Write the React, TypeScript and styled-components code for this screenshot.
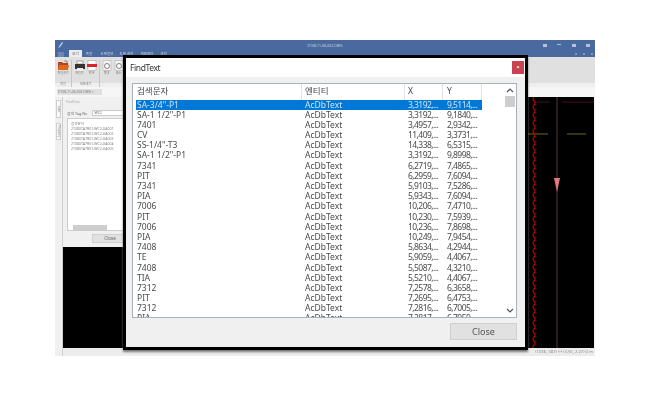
import React from "react";
import styled, { createGlobalStyle } from "styled-components";

const Global = createGlobalStyle`
  html, body { margin: 0; padding: 0; background: #fff; }
  body { font-family: "Noto Sans", "Noto Sans CJK KR", sans-serif; }
`;

const Stage = styled.div`
  width: 650px;
  height: 400px;
  padding: 40px 55px 44px 55px;
  box-sizing: border-box;
  position: relative;
  overflow: hidden;
  filter: blur(0.35px);
`;

const AppWindow = styled.div`
  width: 540px;
  height: 316px;
  display: flex;
  flex-direction: column;
  background: #f0f0f0;
`;

const TitleBar = styled.div`
  height: 10px;
  flex: none;
  background: #4a6a9f;
  display: flex;
  align-items: center;
  justify-content: center;
  position: relative;
  color: #c9d4e6;
  font-size: 3.5px;
`;

const AppLogo = styled.svg`
  position: absolute;
  left: 2px;
  top: 1px;
`;

const WindowButtons = styled.div`
  position: absolute;
  right: 5px;
  top: 4px;
  display: flex;
  gap: 10.5px;
`;

const WinDot = styled.span<{ $h: number }>`
  display: block;
  width: 4px;
  height: ${(p) => p.$h}px;
  background: #b5c3da;
`;

const TabBar = styled.div`
  height: 7px;
  flex: none;
  background: #4a6a9f;
  display: flex;
  align-items: stretch;
  padding-left: 3px;
  font-size: 3.5px;
  line-height: 7px;
`;

const AppMenu = styled.div`
  width: 6px;
  margin: 2px 5px 0 0;
  background: #6c87b4;
`;

const RibbonTab = styled.div<{ $active?: boolean; $w: number }>`
  width: ${(p) => p.$w}px;
  text-align: center;
  white-space: nowrap;
  background: ${(p) => (p.$active ? "#ececec" : "transparent")};
  color: ${(p) => (p.$active ? "#666" : "#cfd8e8")};
`;

const MiniButtons = styled.div`
  margin-left: auto;
  padding-right: 2px;
  display: flex;
  align-items: center;
  gap: 6px;
`;

const MiniDot = styled.span`
  display: block;
  width: 2px;
  height: 2px;
  background: #7f97bd;
`;

const Ribbon = styled.div`
  height: 30px;
  flex: none;
  background: linear-gradient(#e0e0e0 0 26px, #efefef 26px);
  display: flex;
  padding: 3px 0 0 0;
  box-sizing: border-box;
`;

const RibbonGroup = styled.div<{ $w: number }>`
  width: ${(p) => p.$w}px;
  flex: none;
  display: flex;
  flex-direction: column;
  align-items: center;
  border-right: 1px solid #c6c6c6;
  box-sizing: border-box;
`;

const GroupIcons = styled.div`
  display: flex;
  gap: 2px;
  height: 22px;
`;

const RibbonIcon = styled.div`
  width: 10px;
  display: flex;
  flex-direction: column;
  align-items: center;
  color: #777;
  font-size: 3px;
  line-height: 5px;
  white-space: nowrap;
`;

const GroupLabel = styled.div`
  font-size: 3px;
  color: #777;
  line-height: 5px;
`;

const DocStrip = styled.div`
  height: 10px;
  flex: none;
  background: #f6f6f6;
  display: flex;
  align-items: flex-start;
  padding: 2px 0 0 2px;
  box-sizing: border-box;
`;

const DocTab = styled.div`
  width: 45px;
  height: 6px;
  background: #e0e0e0;
  color: #777;
  font-size: 3.3px;
  line-height: 6px;
  padding-left: 1px;
  box-sizing: border-box;
  white-space: nowrap;
`;

const WorkArea = styled.div`
  flex: 1;
  display: flex;
  min-height: 0;
`;

const SideStrip = styled.div`
  width: 8px;
  flex: none;
  background: #f0f0f0;
  border-right: 1px solid #cfcfcf;
  box-sizing: border-box;
  display: flex;
  flex-direction: column;
  align-items: center;
  gap: 5px;
  padding-top: 3px;
`;

const SideTab = styled.div<{ $h: number }>`
  width: 5px;
  height: ${(p) => p.$h}px;
  background: #f8f8f8;
  border: 1px solid #cfcfcf;
  box-sizing: border-box;
  writing-mode: vertical-rl;
  font-size: 3px;
  line-height: 3px;
  color: #888;
  text-align: center;
`;

const CanvasColumn = styled.div`
  flex: 1;
  display: flex;
  flex-direction: column;
  min-width: 0;
  padding-right: 1px;
`;

const Canvas = styled.div`
  flex: 1;
  background: #000;
  position: relative;
  overflow: hidden;
`;

const Drawing = styled.svg`
  position: absolute;
  left: 0;
  top: 0;
`;

const StatusBar = styled.div`
  height: 8px;
  flex: none;
  background: #ececec;
  color: #888;
  font-size: 4.2px;
  line-height: 8px;
  text-align: right;
  padding-right: 1px;
  white-space: nowrap;
`;

const ToolPanel = styled.div`
  position: absolute;
  left: 0;
  top: 0;
  width: 66px;
  height: 150px;
  background: #f0f0f0;
  display: flex;
  flex-direction: column;
  padding: 0 0 0 4px;
  box-sizing: border-box;
`;

const ToolTitle = styled.div`
  height: 12px;
  flex: none;
  color: #aaa;
  font-size: 3.5px;
  line-height: 9px;
  margin-left: -1px;
`;

const ToolSearch = styled.div`
  height: 8px;
  flex: none;
  display: flex;
  align-items: center;
  gap: 5px;
  font-size: 3.8px;
  color: #666;
  white-space: nowrap;
`;

const ToolInput = styled.div`
  flex: 1;
  height: 6px;
  background: #fff;
  border: 1px solid #ccc;
  box-sizing: border-box;
  font-size: 3.5px;
  line-height: 4px;
  padding-left: 1px;
`;

const ToolList = styled.div`
  margin-top: 1px;
  height: 113px;
  flex: none;
  background: #fff;
  border: 1px solid #ccc;
  box-sizing: border-box;
  padding: 2px 0 0 3px;
  color: #808080;
  font-size: 3.5px;
  line-height: 5px;
  white-space: nowrap;
  overflow: hidden;
  position: relative;
`;

const ToolScroll = styled.div`
  position: absolute;
  left: 5px;
  bottom: 0;
  width: 34px;
  height: 5px;
  background: #cdcdcd;
`;

const ToolFooter = styled.div`
  display: flex;
  padding: 3px 0 0 25px;
`;

const ToolClose = styled.div`
  width: 36px;
  height: 9px;
  background: #e1e1e1;
  border: 1px solid #d0d0d0;
  box-sizing: border-box;
  font-size: 4.5px;
  line-height: 7px;
  text-align: center;
  color: #666;
`;

const Dialog = styled.div`
  position: absolute;
  left: 123px;
  top: 55px;
  width: 405px;
  height: 295px;
  box-sizing: border-box;
  border: 3px solid #000;
  box-shadow: 0 2px 2px #777;
  background: #f0f0f0;
  display: flex;
  flex-direction: column;
`;

const DialogHead = styled.div`
  height: 19px;
  flex: none;
  background: #fff;
  display: flex;
  align-items: center;
  justify-content: space-between;
  padding: 0 1px 0 4px;
  font-size: 8.5px;
  letter-spacing: -0.4px;
  color: #333;
`;

const CloseX = styled.div`
  width: 12px;
  height: 13px;
  background: #c8434f;
  color: #fff;
  font-size: 6px;
  line-height: 12px;
  letter-spacing: 0;
  text-align: center;
  font-weight: 700;
`;

const DialogBody = styled.div`
  flex: 1;
  display: flex;
  flex-direction: column;
  padding: 6px 8px 0 6px;
  min-height: 0;
`;

const ListBox = styled.div`
  height: 235px;
  flex: none;
  background: #fff;
  border: 1px solid #a9b0bd;
  box-sizing: border-box;
  display: flex;
  overflow: hidden;
`;

const ListInner = styled.div`
  width: 349px;
  flex: none;
  padding-left: 3px;
  box-sizing: border-box;
`;

const HeaderRow = styled.div`
  display: grid;
  grid-template-columns: 166px 103px 38px 39px;
  height: 15.5px;
`;

const HeaderCell = styled.div<{ $pad: number }>`
  border-right: 1px solid #e3e3e3;
  font-size: 8.5px;
  line-height: 14px;
  padding-left: ${(p) => p.$pad}px;
  color: #444;
  white-space: nowrap;
  overflow: hidden;
`;

const Row = styled.div<{ $selected?: boolean }>`
  display: grid;
  grid-template-columns: 166px 103px 38px 39px;
  height: 10.2px;
  line-height: 10.2px;
  font-size: 8.5px;
  background: ${(p) => (p.$selected ? "#0078d7" : "transparent")};
  color: ${(p) => (p.$selected ? "#cfe2f5" : "#4a4a4a")};
`;

const NameCell = styled.div`
  padding-left: 1px;
  white-space: nowrap;
  overflow: hidden;
`;

const TypeCell = styled.div`
  padding-left: 3px;
  white-space: nowrap;
  overflow: hidden;
`;

const NumberCell = styled.div<{ $pad: number }>`
  padding-left: ${(p) => p.$pad}px;
  letter-spacing: -0.55px;
  white-space: nowrap;
  overflow: hidden;
`;

const ScrollBar = styled.div`
  flex: 1;
  display: flex;
  justify-content: flex-end;
`;

const ScrollTrack = styled.div`
  width: 12px;
  display: flex;
  flex-direction: column;
  align-items: center;
  justify-content: space-between;
  background: #fff;
  padding: 0 0 1px;
  box-sizing: border-box;
`;

const ScrollTop = styled.div`
  display: flex;
  flex-direction: column;
  align-items: center;
  width: 100%;
`;

const ScrollThumb = styled.div`
  width: 10px;
  height: 11px;
  background: #cdcdcd;
`;

const Footer = styled.div`
  display: flex;
  justify-content: flex-end;
  padding-top: 5px;
`;

const CloseButton = styled.div`
  width: 67px;
  height: 17px;
  background: #e1e1e1;
  border: 1px solid #cfcfcf;
  box-sizing: border-box;
  font-size: 9px;
  line-height: 15px;
  text-align: center;
  color: #555;
`;

const rows: [string, string, string][] = [
  ['SA-3/4"-P1', "3,3192,...", "9,5114,..."],
  ['SA-1 1/2"-P1', "3,3192,...", "9,1840,..."],
  ["7401", "3,4957,...", "2,9342,..."],
  ["CV", "11,409,...", "3,3731,..."],
  ['SS-1/4"-T3', "14,338,...", "6,5315,..."],
  ['SA-1 1/2"-P1', "3,3192,...", "9,8998,..."],
  ["7341", "6,2719,...", "7,4865,..."],
  ["PIT", "6,2959,...", "7,6094,..."],
  ["7341", "5,9103,...", "7,5286,..."],
  ["PIA", "5,9343,...", "7,6094,..."],
  ["7006", "10,206,...", "7,4710,..."],
  ["PIT", "10,230,...", "7,5939,..."],
  ["7006", "10,236,...", "7,8698,..."],
  ["PIA", "10,249,...", "7,9454,..."],
  ["7408", "5,8634,...", "4,2944,..."],
  ["TE", "5,9059,...", "4,4067,..."],
  ["7408", "5,5087,...", "4,3210,..."],
  ["TIA", "5,5210,...", "4,4067,..."],
  ["7312", "7,2578,...", "6,3658,..."],
  ["PIT", "7,2695,...", "6,4753,..."],
  ["7312", "7,2816,...", "6,7005,..."],
  ["PIA", "7,2817,...", "6,7059,..."],
];

const tabs: [string, number][] = [
  ["보기", 13],
  ["측정", 14],
  ["도면정보", 22],
  ["도면 관리", 17],
  ["개체관리", 24],
  ["설정", 9],
];

const toolItems = [
  "21080TA7R01-WC2-UA001",
  "21080TA7R01-WC2-UA002",
  "21080TA7R01-WC2-UA003",
  "21080TA7R01-WC2-UA004",
  "21080TA7R01-WC2-UA005",
];

function wavyLine() {
  let d = "M471 0";
  for (let y = 0, i = 0; y < 260; y += 4, i++) {
    d += ` Q${471 + (i % 2 ? 2 : -2)} ${y + 2} 471 ${y + 4}`;
  }
  return d;
}

export default function App() {
  return (
    <Stage>
      <Global />
      <AppWindow>
        <TitleBar>
          <AppLogo width="7" height="8" viewBox="0 0 7 8">
            <path d="M1 7 L5 1 L6 2 L3 6 Z" fill="#c9d4e6" />
          </AppLogo>
          D108-11-06-002.DWG
          <WindowButtons>
            <WinDot $h={3} />
            <WinDot $h={1} />
            <WinDot $h={3} />
            <WinDot $h={3} />
          </WindowButtons>
        </TitleBar>
        <TabBar>
          <AppMenu />
          {tabs.map(([t, w], i) => (
            <RibbonTab key={t} $active={i === 0} $w={w}>
              {t}
            </RibbonTab>
          ))}
          <MiniButtons>
            <MiniDot />
            <MiniDot />
            <MiniDot />
          </MiniButtons>
        </TabBar>
        <Ribbon>
          <RibbonGroup $w={17}>
            <GroupIcons>
              <RibbonIcon>
                <svg width="11" height="11" viewBox="0 0 11 11">
                  <path d="M0 2h4l1 1h5v7H0z" fill="#b5451f" />
                  <path d="M1 5h10l-1 5H0z" fill="#df6a1f" />
                  <path d="M6 1h3v3" fill="none" stroke="#555" strokeWidth=".6" />
                </svg>
                파일열기
              </RibbonIcon>
            </GroupIcons>
            <GroupLabel>파일</GroupLabel>
          </RibbonGroup>
          <RibbonGroup $w={28}>
            <GroupIcons>
              <RibbonIcon>
                <svg width="10" height="11" viewBox="0 0 10 11">
                  <rect x="2" y="1" width="6" height="3" fill="#fff" stroke="#555" strokeWidth=".5" />
                  <rect x="0" y="4" width="10" height="5" fill="#333" />
                  <rect x="2" y="8" width="6" height="3" fill="#eee" />
                </svg>
                프린트
              </RibbonIcon>
              <RibbonIcon>
                <svg width="10" height="11" viewBox="0 0 10 11">
                  <rect x="1" y="0.5" width="8" height="10" fill="#fff" stroke="#999" strokeWidth=".5" />
                  <rect x="0" y="4" width="10" height="3" fill="#d9262c" />
                </svg>
                PDF
              </RibbonIcon>
            </GroupIcons>
            <GroupLabel>내보내기</GroupLabel>
          </RibbonGroup>
          <RibbonGroup $w={26}>
            <GroupIcons>
              <RibbonIcon>
                <svg width="10" height="11" viewBox="0 0 10 11">
                  <rect x="1" y="0.5" width="8" height="10" fill="#f2f2f2" stroke="#aaa" strokeWidth=".5" />
                  <circle cx="5" cy="6" r="2.5" fill="#fff" stroke="#666" strokeWidth=".8" />
                </svg>
                확대
              </RibbonIcon>
              <RibbonIcon>
                <svg width="10" height="11" viewBox="0 0 10 11">
                  <rect x="1" y="0.5" width="8" height="10" fill="#f2f2f2" stroke="#aaa" strokeWidth=".5" />
                  <circle cx="5" cy="6" r="2.5" fill="#fff" stroke="#666" strokeWidth=".8" />
                </svg>
                축소
              </RibbonIcon>
            </GroupIcons>
          </RibbonGroup>
        </Ribbon>
        <DocStrip>
          <DocTab>D108-11-06-002.DWG ×</DocTab>
        </DocStrip>
        <WorkArea>
          <SideStrip>
            <SideTab $h={18}>검색</SideTab>
            <SideTab $h={17}>Property</SideTab>
          </SideStrip>
          <CanvasColumn>
            <Canvas>
              <Drawing width="531" height="254" viewBox="0 0 531 254">
                <line x1="494" y1="0" x2="494" y2="254" stroke="#3a2024" strokeWidth="1.6" />
                <path d="M465 37H485 M504 37H523" stroke="#6b6a12" strokeWidth="1" />
                <path d="M472 5H487 M499 5H531" stroke="#4a0f1a" strokeWidth="1" />
                <path d={wavyLine()} fill="none" stroke="#c40000" strokeWidth="1.1" />
                <path d="M491 81H497L494 95Z" fill="#e57a7a" />
              </Drawing>
              <ToolPanel>
                <ToolTitle>FindText</ToolTitle>
                <ToolSearch>
                  검색 Tag No
                  <ToolInput>WC2</ToolInput>
                </ToolSearch>
                <ToolList>
                  검색문자
                  {toolItems.map((t) => (
                    <div key={t}>{t}</div>
                  ))}
                  <ToolScroll />
                </ToolList>
                <ToolFooter>
                  <ToolClose>Close</ToolClose>
                </ToolFooter>
              </ToolPanel>
            </Canvas>
            <StatusBar>(1036, 387) ↔ (3.55, 2.27) 0 m</StatusBar>
          </CanvasColumn>
        </WorkArea>
      </AppWindow>
      <Dialog>
        <DialogHead>
          FindText
          <CloseX>×</CloseX>
        </DialogHead>
        <DialogBody>
          <ListBox>
            <ListInner>
              <HeaderRow>
                <HeaderCell $pad={1}>검색문자</HeaderCell>
                <HeaderCell $pad={3}>엔티티</HeaderCell>
                <HeaderCell $pad={3}>X</HeaderCell>
                <HeaderCell $pad={4}>Y</HeaderCell>
              </HeaderRow>
              {rows.map((r, i) => (
                <Row key={i} $selected={i === 0}>
                  <NameCell>{r[0]}</NameCell>
                  <TypeCell>AcDbText</TypeCell>
                  <NumberCell $pad={3}>{r[1]}</NumberCell>
                  <NumberCell $pad={4}>{r[2]}</NumberCell>
                </Row>
              ))}
            </ListInner>
            <ScrollBar>
              <ScrollTrack>
                <ScrollTop>
                  <svg width="10" height="12" viewBox="0 0 10 12">
                    <path d="M2 8L5 5L8 8" fill="none" stroke="#555" strokeWidth="1.2" />
                  </svg>
                  <ScrollThumb />
                </ScrollTop>
                <svg width="10" height="10" viewBox="0 0 10 10">
                  <path d="M2 3L5 6L8 3" fill="none" stroke="#555" strokeWidth="1.2" />
                </svg>
              </ScrollTrack>
            </ScrollBar>
          </ListBox>
          <Footer>
            <CloseButton>Close</CloseButton>
          </Footer>
        </DialogBody>
      </Dialog>
    </Stage>
  );
}
